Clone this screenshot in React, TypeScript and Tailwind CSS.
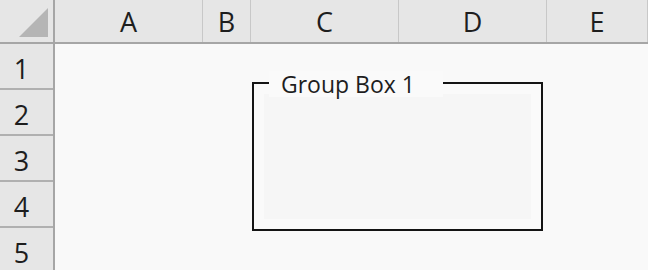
import React from 'react';

const cols = [
  { label: 'A', w: 'w-[148px]' },
  { label: 'B', w: 'w-[48px]' },
  { label: 'C', w: 'w-[148px]' },
  { label: 'D', w: 'w-[148px]' },
  { label: 'E', w: 'flex-1' },
];

const rows = ['1', '2', '3', '4', '5'];

export default function App() {
  return (
    <div className="w-[648px] h-[270px] overflow-hidden bg-[#f9f9f9] font-['Open_Sans',sans-serif] text-[#1e1e1e] flex flex-col">
      {/* Column headers */}
      <div className="flex h-[44px] shrink-0 bg-[#e6e6e6] border-b-2 border-[#a6a6a6]">
        <div className="w-[55px] shrink-0 relative border-r-2 border-[#a6a6a6]">
          <svg className="absolute left-[19px] top-[8px]" width="29" height="29" viewBox="0 0 29 29">
            <polygon points="29,0 29,29 0,29" fill="#b5b5b5" />
          </svg>
        </div>
        {cols.map((c) => (
          <div
            key={c.label}
            className={`${c.w} shrink-0 flex items-center justify-center text-[27px] leading-none border-r border-[#c8c8c8]`}
          >
            {c.label}
          </div>
        ))}
      </div>

      <div className="flex flex-1">
        {/* Row headers */}
        <div className="w-[55px] shrink-0 bg-[#e6e6e6] border-r-2 border-[#a6a6a6] flex flex-col">
          {rows.map((r) => (
            <div
              key={r}
              className="h-[46px] shrink-0 flex items-center justify-center pr-[10px] pt-[4px] text-[27px] leading-none border-b-2 border-[#b0b0b0]"
            >
              {r}
            </div>
          ))}
        </div>

        {/* Sheet area */}
        <div className="flex-1 relative">
          {/* Group box form control */}
          <div className="absolute left-[197px] top-[38px] w-[291px] h-[149px] border-2 border-[#141414] bg-[#fafafa] p-[10px]">
            <div className="w-full h-full bg-[#f6f6f6]" />
            <span className="absolute left-[15px] -top-[13px] px-[12px] w-[174px] bg-[#fafafa] text-[23px] leading-[26px] whitespace-nowrap">
              Group Box 1
            </span>
          </div>
        </div>
      </div>
    </div>
  );
}
